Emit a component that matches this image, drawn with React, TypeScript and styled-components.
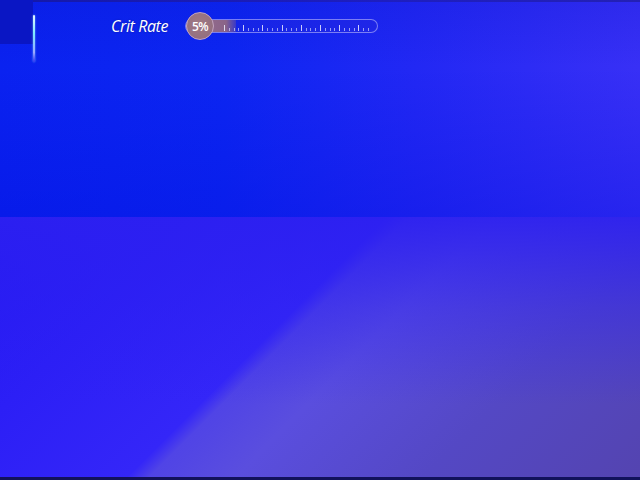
import styled, { createGlobalStyle } from 'styled-components'

const GlobalStyle = createGlobalStyle`
  html, body {
    margin: 0;
    padding: 0;
    background: #0a1ad8;
    overflow: hidden;
  }
  #root {
    width: 640px;
    height: 480px;
  }
`

const Scene = styled.div`
  position: relative;
  width: 640px;
  height: 480px;
  display: flex;
  flex-direction: column;
  overflow: hidden;
  font-family: 'Open Sans', 'Noto Sans', sans-serif;
`

const TopEdge = styled.div`
  height: 2px;
  background: linear-gradient(90deg, #1418a8 0%, #1e1ec0 60%, #2420b4 100%);
`

const Sky = styled.div`
  height: 215px;
  background:
    linear-gradient(180deg, rgba(10, 20, 200, 0.2) 0%, rgba(0, 0, 0, 0) 30%, rgba(0, 10, 220, 0.3) 100%),
    linear-gradient(90deg, #0a22f0 0%, #0c26f2 35%, #2228f4 65%, #3830f6 100%);
`

const Floor = styled.div`
  flex: 1;
  background:
    linear-gradient(180deg, rgba(44, 32, 240, 0.9) 0%, rgba(44, 32, 240, 0.4) 35%, rgba(44, 32, 240, 0) 72%),
    linear-gradient(135deg, #2418f4 0%, #3426f8 43%, #5044e6 45.5%, #5a4ede 55%, #5448c4 76%, #5444b0 100%);
`

const BottomEdge = styled.div`
  height: 3px;
  background: #12125c;
`

const Hud = styled.div`
  position: absolute;
  top: 0;
  left: 0;
  display: flex;
  align-items: flex-start;
`

const Corner = styled.div`
  width: 33px;
  height: 44px;
  background: #0a16c4;
`

const Indicator = styled.div`
  width: 2px;
  height: 47px;
  margin-top: 15px;
  border-radius: 1px;
  background: linear-gradient(180deg, #e6f4ff 0%, #7ee8ff 40%, #9aa8ff 80%, rgba(180, 120, 255, 0.2) 100%);
  box-shadow: 0 0 2px rgba(140, 230, 255, 0.8);
`

const StatRow = styled.div`
  display: flex;
  align-items: center;
  margin-left: 76px;
  margin-top: 12px;
`

const Label = styled.span`
  color: #ffffff;
  font-style: italic;
  font-size: 16px;
  letter-spacing: -0.4px;
  width: 74px;
  text-shadow: 0 0 2px rgba(0, 0, 60, 0.4);
`

const Slider = styled.div`
  position: relative;
  width: 193px;
  height: 28px;
  display: flex;
  align-items: center;
`

const Track = styled.div`
  position: relative;
  width: 193px;
  height: 12px;
  border: 1px solid rgba(200, 200, 255, 0.55);
  border-radius: 7px;
  background: rgba(40, 40, 220, 0.35);
  overflow: hidden;
`

const Fill = styled.div`
  position: absolute;
  left: 0;
  top: 0;
  bottom: 0;
  background: linear-gradient(90deg, #9a7090 0%, #8a6488 80%, rgba(138, 100, 136, 0.3) 100%);
`

const Ticks = styled.div`
  position: absolute;
  left: 38px;
  right: 8px;
  bottom: 1px;
  height: 8px;
  display: flex;
  justify-content: space-between;
  align-items: flex-end;
`

const Tick = styled.span<{ $major: boolean }>`
  width: 1px;
  height: ${(p) => (p.$major ? 6 : 3)}px;
  background: rgba(235, 235, 255, ${(p) => (p.$major ? 0.85 : 0.6)});
`

const Knob = styled.div`
  position: absolute;
  left: 1px;
  top: 0;
  width: 28px;
  height: 28px;
  border-radius: 50%;
  background: radial-gradient(circle at 45% 40%, #a07a84 0%, #947080 70%, #8a6878 100%);
  border: 1.5px solid #c4a4c0;
  box-sizing: border-box;
  display: flex;
  align-items: center;
  justify-content: center;
  color: #ffffff;
  font-size: 12px;
  font-weight: 600;
  letter-spacing: -0.6px;
`

const ticks = Array.from({ length: 31 }, (_, i) => i % 4 === 0)

export default function App() {
  const value = 5
  return (
    <>
      <GlobalStyle />
      <Scene>
        <TopEdge />
        <Sky />
        <Floor />
        <BottomEdge />
        <Hud>
          <Corner />
          <Indicator />
          <StatRow>
            <Label>Crit Rate</Label>
            <Slider>
              <Track>
                <Fill style={{ width: 50 }} />
                <Ticks>
                  {ticks.map((major, i) => (
                    <Tick key={i} $major={major} />
                  ))}
                </Ticks>
              </Track>
              <Knob>{value}%</Knob>
            </Slider>
          </StatRow>
        </Hud>
      </Scene>
    </>
  )
}
